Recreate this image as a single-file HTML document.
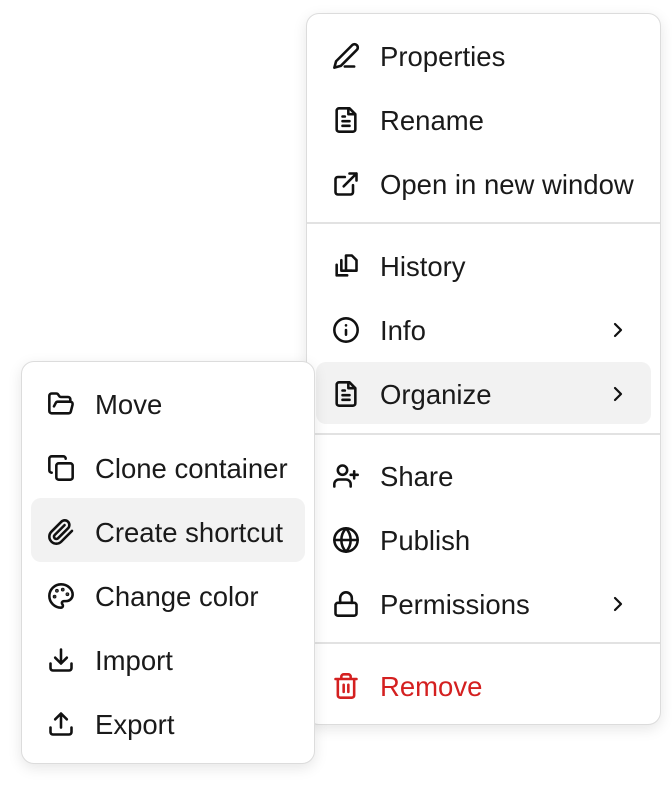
<!DOCTYPE html>
<html><head><meta charset="utf-8"><style>
html,body{margin:0;padding:0;background:#fff;width:672px;height:788px;overflow:hidden;font-family:"Liberation Sans",sans-serif;}
.menu{position:absolute;background:#fff;border:1px solid #dcdcdc;border-radius:13px;box-shadow:0 4px 14px rgba(0,0,0,0.10);}
.it{position:absolute;height:64px;left:0;right:0;display:flex;align-items:center;font-size:27.5px;color:#1a1a1a;}
.it svg{position:absolute;top:17px;width:28px;height:28px;fill:none;stroke:#111;stroke-width:2.2;stroke-linecap:round;stroke-linejoin:round;}
.it span{position:absolute;top:16px;line-height:32px;}
.hl{position:absolute;background:#f2f2f2;border-radius:10px;}
.dv{position:absolute;left:0;right:0;height:2px;background:#e2e2e2;}
.it svg.ch{top:19px;width:24px;height:24px;}
</style></head><body>

<div class="menu" style="left:306px;top:13px;width:353px;height:710px;">
  <div class="hl" style="left:9px;top:348px;width:335px;height:62px;"></div>
  <div class="dv" style="top:208px"></div>
  <div class="dv" style="top:419px"></div>
  <div class="dv" style="top:628px"></div>

  <div class="it" style="top:11px"><svg style="left:25px" viewBox="0 0 24 24"><path d="M17 3a2.85 2.85 0 1 1 4 4L7.5 20.5 2 22l1.5-5.5Z"/><path d="M13 21h8" transform="translate(-2,0)"/></svg><span style="left:73px">Properties</span></div>
  <div class="it" style="top:75px"><svg style="left:25px" viewBox="0 0 24 24"><path d="M15 2H6a2 2 0 0 0-2 2v16a2 2 0 0 0 2 2h12a2 2 0 0 0 2-2V7Z"/><path d="M14 2v5h5M9 13h6M9 17h6M9 9h2"/></svg><span style="left:73px">Rename</span></div>
  <div class="it" style="top:139px"><svg style="left:25px" viewBox="0 0 24 24"><path d="M15 3h6v6M10 14 21 3M18 13v6a2 2 0 0 1-2 2H5a2 2 0 0 1-2-2V8a2 2 0 0 1 2-2h6"/></svg><span style="left:73px">Open in new window</span></div>

  <div class="it" style="top:221px"><svg style="left:25px" viewBox="0 0 24 24"><path d="M4 11v9h9M8 7v9h9"/><path d="M12 3h5l4 4v9h-9z"/></svg><span style="left:73px">History</span></div>
  <div class="it" style="top:285px"><svg style="left:25px" viewBox="0 0 24 24"><circle cx="12" cy="12" r="10"/><path d="M12 16v-4M12 8h.01"/></svg><span style="left:73px">Info</span><svg class="ch" style="left:299px" viewBox="0 0 24 24"><path d="m9 18 6-6-6-6"/></svg></div>
  <div class="it" style="top:349px"><svg style="left:25px" viewBox="0 0 24 24"><path d="M15 2H6a2 2 0 0 0-2 2v16a2 2 0 0 0 2 2h12a2 2 0 0 0 2-2V7Z"/><path d="M14 2v5h5M9 13h6M9 17h6M9 9h2"/></svg><span style="left:73px">Organize</span><svg class="ch" style="left:299px" viewBox="0 0 24 24"><path d="m9 18 6-6-6-6"/></svg></div>

  <div class="it" style="top:431px"><svg style="left:25px" viewBox="0 0 24 24"><path d="M16 21v-2a4 4 0 0 0-4-4H6a4 4 0 0 0-4 4v2"/><circle cx="9" cy="7" r="4"/><path d="M19 8v6M22 11h-6"/></svg><span style="left:73px">Share</span></div>
  <div class="it" style="top:495px"><svg style="left:25px" viewBox="0 0 24 24"><circle cx="12" cy="12" r="10"/><path d="M12 2a14.5 14.5 0 0 0 0 20 14.5 14.5 0 0 0 0-20M2 12h20"/></svg><span style="left:73px">Publish</span></div>
  <div class="it" style="top:559px"><svg style="left:25px" viewBox="0 0 24 24"><rect x="3" y="11" width="18" height="11" rx="2"/><path d="M7 11V7a5 5 0 0 1 10 0v4"/></svg><span style="left:73px">Permissions</span><svg class="ch" style="left:299px" viewBox="0 0 24 24"><path d="m9 18 6-6-6-6"/></svg></div>

  <div class="it" style="top:641px;color:#d42020"><svg style="left:25px;stroke:#d42020" viewBox="0 0 24 24"><path d="M3 6h18M19 6v14a2 2 0 0 1-2 2H7a2 2 0 0 1-2-2V6M8 6V4a2 2 0 0 1 2-2h4a2 2 0 0 1 2 2v2M10 11v6M14 11v6"/></svg><span style="left:73px">Remove</span></div>
</div>

<div class="menu" style="left:21px;top:361px;width:292px;height:401px;">
  <div class="hl" style="left:9px;top:136px;width:274px;height:64px;"></div>
  <div class="it" style="top:11px"><svg style="left:25px" viewBox="0 0 24 24"><path d="m6 14 1.5-2.9A2 2 0 0 1 9.24 10H20a2 2 0 0 1 1.94 2.5l-1.54 6a2 2 0 0 1-1.95 1.5H4a2 2 0 0 1-2-2V5a2 2 0 0 1 2-2h3.9a2 2 0 0 1 1.69.9l.81 1.2a2 2 0 0 0 1.67.9H18a2 2 0 0 1 2 2v2"/></svg><span style="left:73px">Move</span></div>
  <div class="it" style="top:75px"><svg style="left:25px" viewBox="0 0 24 24"><rect x="8" y="8" width="14" height="14" rx="2"/><path d="M4 16c-1.1 0-2-.9-2-2V4c0-1.1.9-2 2-2h10c1.1 0 2 .9 2 2"/></svg><span style="left:73px">Clone container</span></div>
  <div class="it" style="top:139px"><svg style="left:25px" viewBox="0 0 24 24"><path d="m21.44 11.05-9.19 9.19a6 6 0 0 1-8.49-8.49l8.57-8.57A4 4 0 1 1 18 8.84l-8.59 8.57a2 2 0 0 1-2.83-2.83l8.49-8.48"/></svg><span style="left:73px">Create shortcut</span></div>
  <div class="it" style="top:203px"><svg style="left:25px" viewBox="0 0 24 24"><circle cx="13.5" cy="6.5" r=".5" fill="#111"/><circle cx="17.5" cy="10.5" r=".5" fill="#111"/><circle cx="8.5" cy="7.5" r=".5" fill="#111"/><circle cx="6.5" cy="12.5" r=".5" fill="#111"/><path d="M12 2C6.5 2 2 6.5 2 12s4.5 10 10 10c.93 0 1.65-.75 1.65-1.69 0-.44-.18-.84-.44-1.13-.29-.29-.44-.65-.44-1.13a1.64 1.64 0 0 1 1.67-1.67h2c3.05 0 5.55-2.5 5.55-5.55C21.97 6.01 17.46 2 12 2z"/></svg><span style="left:73px">Change color</span></div>
  <div class="it" style="top:267px"><svg style="left:25px" viewBox="0 0 24 24"><path d="M21 15v4a2 2 0 0 1-2 2H5a2 2 0 0 1-2-2v-4M7 10l5 5 5-5M12 15V3"/></svg><span style="left:73px">Import</span></div>
  <div class="it" style="top:331px"><svg style="left:25px" viewBox="0 0 24 24"><path d="M21 15v4a2 2 0 0 1-2 2H5a2 2 0 0 1-2-2v-4M17 8l-5-5-5 5M12 3v12"/></svg><span style="left:73px">Export</span></div>
</div>
</body></html>
